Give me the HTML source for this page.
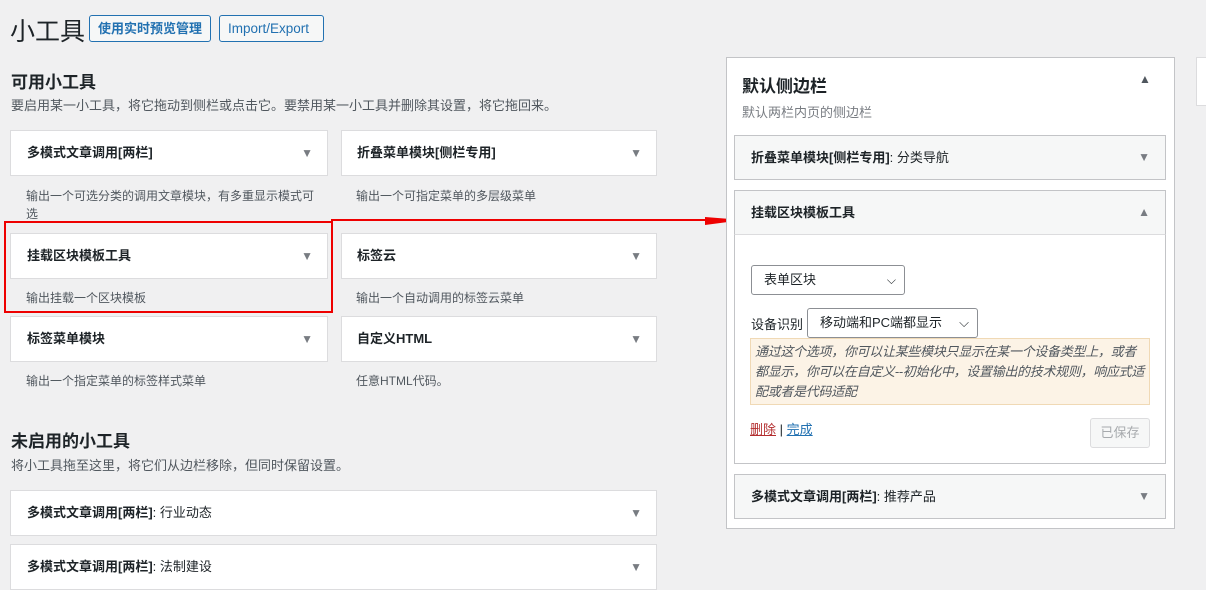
<!DOCTYPE html>
<html><head><meta charset="utf-8"><style>
*{box-sizing:border-box;margin:0;padding:0}
body{width:1206px;height:567px;overflow:hidden;background:#f0f0f1;font-family:"Liberation Sans","Noto Sans CJK SC",sans-serif;color:#1d2327;position:relative;font-size:13px}
.a{position:absolute}
.btn{position:absolute;top:15px;height:27px;border:1px solid #2271b1;border-radius:3px;color:#2271b1;background:#f6f7f7;font-size:13px;line-height:25px;padding:0 8px}
.w{position:absolute;height:46px;background:#fff;border:1px solid #dcdcde;font-weight:bold;font-size:13px;line-height:44px;padding-left:16px}
.w .t{position:absolute;right:14px;top:0;font-size:12px;color:#787c82;font-weight:normal}
.d{position:absolute;font-size:12px;color:#50575e;line-height:18px}
.s{position:absolute;left:734px;width:432px;background:#f6f7f7;border:1px solid #c3c4c7;font-weight:bold;font-size:13px;padding-left:16px;line-height:43px}
.s .t{position:absolute;right:15px;top:0;font-size:12px;color:#787c82;font-weight:normal}
.sel{position:absolute;height:30px;border:1px solid #8c8f94;border-radius:3px;background:#fff;font-size:13px;line-height:28px;padding-left:12px}
</style></head><body>
<div class="a" style="left:10px;top:12px;font-size:25px;color:#1d2327">小工具</div>
<div class="btn" style="left:89px;font-weight:bold">使用实时预览管理</div>
<div class="btn" style="left:219px;width:105px;font-size:13.5px">Import/Export</div>
<div class="a" style="left:11px;top:68px;font-size:17px;font-weight:bold">可用小工具</div>
<div class="d" style="left:11px;top:97px;font-size:13px">要启用某一小工具，将它拖动到侧栏或点击它。要禁用某一小工具并删除其设置，将它拖回来。</div>

<div class="w" style="left:10px;top:130px;width:318px">多模式文章调用[两栏]<span class="t">▼</span></div>
<div class="w" style="left:341px;top:130px;width:316px;padding-left:15px">折叠菜单模块[侧栏专用]<span class="t">▼</span></div>
<div class="d" style="left:26px;top:187px;width:290px">输出一个可选分类的调用文章模块，有多重显示模式可选</div>
<div class="d" style="left:356px;top:187px">输出一个可指定菜单的多层级菜单</div>
<div class="w" style="left:10px;top:233px;width:318px">挂载区块模板工具<span class="t">▼</span></div>
<div class="w" style="left:341px;top:233px;width:316px;padding-left:15px">标签云<span class="t">▼</span></div>
<div class="d" style="left:26px;top:289px">输出挂载一个区块模板</div>
<div class="d" style="left:356px;top:289px">输出一个自动调用的标签云菜单</div>
<div class="w" style="left:10px;top:316px;width:318px">标签菜单模块<span class="t">▼</span></div>
<div class="w" style="left:341px;top:316px;width:316px;padding-left:15px">自定义HTML<span class="t">▼</span></div>
<div class="d" style="left:26px;top:372px">输出一个指定菜单的标签样式菜单</div>
<div class="d" style="left:356px;top:372px">任意HTML代码。</div>

<div class="a" style="left:11px;top:427px;font-size:17px;font-weight:bold">未启用的小工具</div>
<div class="d" style="left:11px;top:457px;font-size:13px">将小工具拖至这里，将它们从边栏移除，但同时保留设置。</div>
<div class="w" style="left:10px;top:490px;width:647px">多模式文章调用[两栏]<span style="font-weight:normal">: 行业动态</span><span class="t">▼</span></div>
<div class="w" style="left:10px;top:544px;width:647px">多模式文章调用[两栏]<span style="font-weight:normal">: 法制建设</span><span class="t">▼</span></div>

<div class="a" style="left:4px;top:221px;width:329px;height:92px;border:2px solid #e00"></div>
<div class="a" style="left:331px;top:219px;width:380px;height:2px;background:#e00"></div>
<svg class="a" style="left:705px;top:212px" width="40" height="18"><path d="M0 5 L38 8 L0 13 Z" fill="#e00"/></svg>

<div class="a" style="left:726px;top:57px;width:449px;height:472px;background:#fff;border:1px solid #c3c4c7"></div>
<div class="a" style="left:742px;top:72px;font-size:17px;font-weight:bold">默认侧边栏</div>
<div class="a" style="left:1139px;top:72px;font-size:12px;color:#50575e">▲</div>
<div class="a" style="left:742px;top:102px;font-size:13px;color:#787c82">默认两栏内页的侧边栏</div>
<div class="s" style="top:135px;height:45px">折叠菜单模块[侧栏专用]<span style="font-weight:normal">: 分类导航</span><span class="t">▼</span></div>
<div class="s" style="top:190px;height:45px">挂载区块模板工具<span class="t">▲</span></div>
<div class="a" style="left:734px;top:234px;width:432px;height:230px;background:#fff;border:1px solid #c3c4c7;border-top:1px solid #dcdcde"></div>
<div class="sel" style="left:751px;top:265px;width:154px">表单区块<span class="a" style="right:8px;top:0;font-size:12px">⌵</span></div>
<div class="a" style="left:751px;top:314px;font-size:13px">设备识别</div>
<div class="sel" style="left:807px;top:308px;width:171px;line-height:28px">移动端和PC端都显示<span class="a" style="right:8px;top:0">⌵</span></div>
<div class="a" style="left:750px;top:338px;width:400px;height:67px;background:#fcf3e6;border:1px solid #f0d9b5;font-style:italic;color:#50575e;font-size:13px;line-height:20px;padding:3px 4px;letter-spacing:-0.3px">通过这个选项，你可以让某些模块只显示在某一个设备类型上，或者都显示，你可以在自定义--初始化中，设置输出的技术规则，响应式适配或者是代码适配</div>
<div class="a" style="left:750px;top:419px;font-size:13px"><span style="color:#b32d2e;text-decoration:underline">删除</span> | <span style="color:#2271b1;text-decoration:underline">完成</span></div>
<div class="a" style="left:1090px;top:418px;width:60px;height:30px;border:1px solid #dcdcde;border-radius:3px;background:#f6f7f7;color:#a7aaad;text-align:center;line-height:28px">已保存</div>
<div class="s" style="top:474px;height:45px">多模式文章调用[两栏]<span style="font-weight:normal">: 推荐产品</span><span class="t">▼</span></div>

<div class="a" style="left:1196px;top:57px;width:20px;height:49px;background:#fff;border:1px solid #dcdcde"></div>
</body></html>
